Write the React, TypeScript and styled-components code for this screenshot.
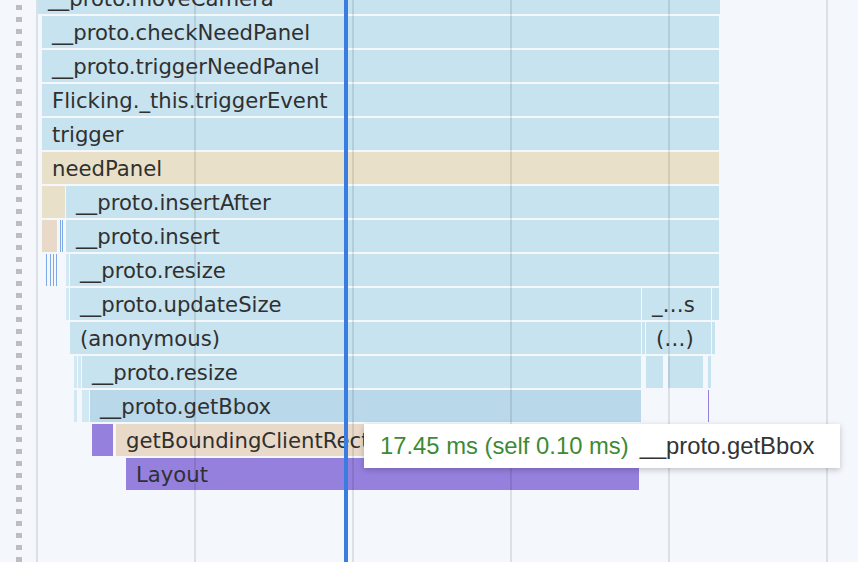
import React from 'react';
import styled, { createGlobalStyle } from 'styled-components';

const GlobalStyle = createGlobalStyle`
  html, body { margin: 0; padding: 0; background: #f4f7fc; overflow: hidden; }
  #root { width: 858px; height: 562px; }
`;

type Kind = 'blue' | 'light' | 'tan' | 'peach' | 'dark' | 'purple' | 'mark' | 'markPurple';

const COLORS: Record<Kind, string> = {
  blue: '#c7e3ef',
  light: '#d2e9f3',
  tan: '#e8e0c9',
  peach: '#e9d9c8',
  dark: '#b9d8ea',
  purple: '#9580de',
  mark: '#7ea8e6',
  markPurple: '#9580de',
};

const ORIGIN = 38;

const Panel = styled.div`
  display: flex;
  width: 858px;
  height: 562px;
  overflow: hidden;
  background: #f4f7fc;
`;

const Gutter = styled.div`
  flex: 0 0 36px;
  display: flex;
  padding-left: 16px;
  box-sizing: border-box;
`;

const DotColumn = styled.div`
  width: 6px;
  height: 100%;
  background: repeating-linear-gradient(
    to bottom,
    transparent 0 5px,
    #bdbdc1 5px 10px,
    transparent 10px 12px
  );
`;

const Chart = styled.div`
  position: relative;
  flex: 1;
  height: 100%;
  border-left: 2px solid #dcdfe4;
  overflow: hidden;
`;

const Rows = styled.div`
  display: flex;
  flex-direction: column;
  gap: 2px;
  margin-top: -18px;
`;

const Row = styled.div`
  position: relative;
  height: 32px;
`;

const Bar = styled.div<{ $kind: Kind }>`
  position: absolute;
  top: 0;
  height: 32px;
  box-sizing: border-box;
  padding-left: 10px;
  background: ${(p) => COLORS[p.$kind]};
  color: #303030;
  font-family: 'DejaVu Sans', sans-serif;
  font-size: 21.2px;
  line-height: 34px;
  white-space: nowrap;
  overflow: hidden;
`;

const GridLine = styled.div`
  position: absolute;
  top: 0;
  bottom: 0;
  width: 2px;
  background: rgba(0, 0, 0, 0.095);
  pointer-events: none;
`;

const Cursor = styled.div`
  position: absolute;
  top: 0;
  bottom: 0;
  left: ${344 - ORIGIN}px;
  width: 4px;
  background: #3b7ce0;
`;

const Tooltip = styled.div`
  position: absolute;
  left: ${364 - ORIGIN}px;
  top: 424px;
  height: 44px;
  display: flex;
  align-items: center;
  gap: 11px;
  padding: 0 26px 0 16px;
  background: #ffffff;
  box-shadow: 0 2px 6px rgba(0, 0, 0, 0.22);
  font-family: 'Liberation Sans', Arial, sans-serif;
  font-size: 23.8px;
  line-height: 44px;
  white-space: nowrap;
`;

const Timing = styled.span`
  color: #3d8a35;
`;

const FnName = styled.span`
  color: #333333;
`;

type B = [number, number, Kind, string?];

const rows: B[][] = [
  [[38, 720, 'blue', '__proto.moveCamera']],
  [[42, 719, 'blue', '__proto.checkNeedPanel']],
  [[42, 719, 'blue', '__proto.triggerNeedPanel']],
  [[42, 719, 'blue', 'Flicking._this.triggerEvent']],
  [[42, 719, 'blue', 'trigger']],
  [[42, 719, 'tan', 'needPanel']],
  [
    [42, 65, 'tan'],
    [66, 719, 'blue', '__proto.insertAfter'],
  ],
  [
    [42, 57, 'peach'],
    [60, 61, 'mark'],
    [62, 63, 'mark'],
    [66, 719, 'blue', '__proto.insert'],
  ],
  [
    [46, 47, 'mark'],
    [50, 51, 'mark'],
    [53, 54, 'mark'],
    [56, 57, 'mark'],
    [66, 69, 'light'],
    [70, 719, 'blue', '__proto.resize'],
  ],
  [
    [66, 69, 'light'],
    [70, 641, 'blue', '__proto.updateSize'],
    [642, 711, 'blue', '_…s'],
    [712, 719, 'blue'],
  ],
  [
    [70, 641, 'blue', '(anonymous)'],
    [642, 645, 'blue'],
    [646, 711, 'blue', '(…)'],
    [712, 715, 'blue'],
  ],
  [
    [74, 77, 'light'],
    [78, 81, 'light'],
    [82, 641, 'blue', '__proto.resize'],
    [646, 663, 'blue'],
    [668, 703, 'blue'],
    [708, 711, 'blue'],
  ],
  [
    [74, 77, 'light'],
    [82, 89, 'light'],
    [90, 641, 'dark', '__proto.getBbox'],
    [708, 709, 'markPurple'],
  ],
  [
    [92, 113, 'purple'],
    [116, 641, 'peach', 'getBoundingClientRect'],
  ],
  [[126, 639, 'purple', 'Layout']],
];

const gridXs = [194, 352, 510, 668, 826];

export default function App() {
  return (
    <>
      <GlobalStyle />
      <Panel>
        <Gutter>
          <DotColumn />
        </Gutter>
        <Chart>
          <Rows>
            {rows.map((bars, i) => (
              <Row key={i}>
                {bars.map(([x0, x1, kind, label], j) => (
                  <Bar
                    key={j}
                    $kind={kind}
                    style={{
                      left: x0 - ORIGIN,
                      width: x1 - x0,
                      paddingLeft: label ? 10 : 0,
                    }}
                  >
                    {label}
                  </Bar>
                ))}
              </Row>
            ))}
          </Rows>
          {gridXs.map((x) => (
            <GridLine key={x} style={{ left: x - ORIGIN }} />
          ))}
          <Cursor />
          <Tooltip>
            <Timing>17.45 ms (self 0.10 ms)</Timing>
            <FnName>__proto.getBbox</FnName>
          </Tooltip>
        </Chart>
      </Panel>
    </>
  );
}
